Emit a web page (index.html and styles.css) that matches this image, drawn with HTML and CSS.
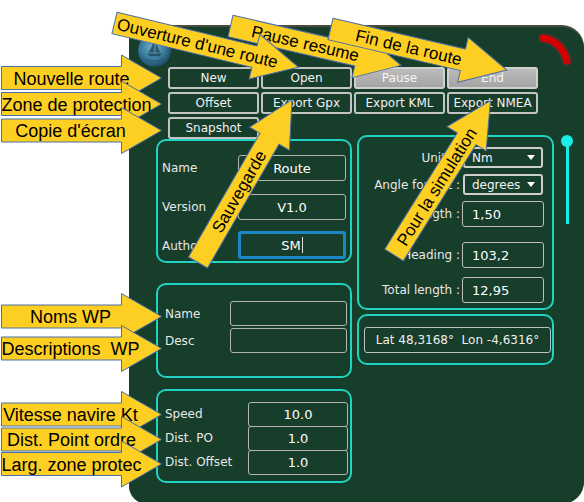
FILE: index.html
```html
<!DOCTYPE html>
<html lang="fr">
<head>
<meta charset="utf-8">
<title>Route editor</title>
<link rel="stylesheet" href="styles.css">
</head>
<body>
<div class="stage">
  <div class="panel">
    <div class="panel-head">
      <svg class="logo" width="35" height="35" viewBox="0 0 36 36">
        <defs>
          <radialGradient id="globe" cx="45%" cy="40%" r="60%">
            <stop offset="0" stop-color="#74b2cf"/>
            <stop offset="0.6" stop-color="#3b7c9e"/>
            <stop offset="1" stop-color="#1c4d66"/>
          </radialGradient>
        </defs>
        <circle cx="18" cy="18" r="17" fill="url(#globe)"/>
        <path d="M18 8 L18 20 L12 20 Z M19 10 L19 20 L24 20 Z" fill="#1f4558" opacity="0.8"/>
        <path d="M10 21 L26 21 L23 24 L13 24 Z" fill="#1f4558" opacity="0.8"/>
        <path d="M8 27 Q18 31 28 27" stroke="#2a5c74" stroke-width="1.5" fill="none"/>
      </svg>
      <svg class="led" width="34" height="34" viewBox="0 0 34 34">
        <path d="M4 5 Q22 7.5 28 28" fill="none" stroke="#3a3a34" stroke-width="10" stroke-linecap="round"/>
        <path d="M4 5 Q22 7.5 28 28" fill="none" stroke="#d20000" stroke-width="7" stroke-linecap="round"/>
      </svg>
    </div>

    <div class="toolbar">
      <div class="btn">New</div>
      <div class="btn">Open</div>
      <div class="btn off">Pause</div>
      <div class="btn off">End</div>
      <div class="btn">Offset</div>
      <div class="btn">Export Gpx</div>
      <div class="btn">Export KML</div>
      <div class="btn">Export NMEA</div>
    </div>

    <div class="content">
      <div class="col-left">
        <div class="btn snap">Snapshot</div>

        <div class="box box-route">
          <span class="lbl">Name</span><div class="field">Route</div>
          <span class="lbl">Version</span><div class="field">V1.0</div>
          <span class="lbl">Author</span><div class="field focus">SM<span class="caret"></span></div>
        </div>

        <div class="box box-wp">
          <span class="lbl">Name</span><div class="field"></div>
          <span class="lbl">Desc</span><div class="field"></div>
        </div>

        <div class="box box-ship">
          <span class="lbl">Speed</span><div class="field">10.0</div>
          <span class="lbl">Dist. PO</span><div class="field">1.0</div>
          <span class="lbl">Dist. Offset</span><div class="field">1.0</div>
        </div>
      </div>

      <div class="col-right">
        <div class="box box-sim">
          <div class="sim-row"><span class="sim-lbl">Units :</span><div class="select"><span>Nm</span><span class="tri"></span></div></div>
          <div class="sim-row r2"><span class="sim-lbl">Angle format :</span><div class="select"><span>degrees</span><span class="tri"></span></div></div>
          <div class="sim-row r3"><span class="sim-lbl">Length :</span><div class="num">1,50</div></div>
          <div class="sim-row r4"><span class="sim-lbl">Heading :</span><div class="num">103,2</div></div>
          <div class="sim-row r5"><span class="sim-lbl">Total length :</span><div class="num">12,95</div></div>
        </div>
        <div class="box box-pos">
          <div class="pos">Lat 48,3168°&nbsp; Lon -4,6316°</div>
        </div>
      </div>

      <div class="slider"><span class="knob"></span><span class="track"></span></div>
    </div>
  </div>

  <svg class="callouts" width="584" height="502" viewBox="0 0 584 502">
    <g class="arrow" transform="translate(230.5 26) rotate(13)">
      <polygon points="0,-11 130,-11 130,-23 175,0 130,23 130,11 0,11"/>
      <text x="22" y="6">Pause resume</text>
    </g>
    <g class="arrow" transform="translate(330.5 29) rotate(13.1)">
      <polygon points="0,-11 136,-11 136,-23 181,0 136,23 136,11 0,11"/>
      <text x="26" y="6">Fin de la route</text>
    </g>
    <g class="arrow" transform="translate(114.5 23) rotate(13.5)">
      <polygon points="0,-11 144,-11 144,-23 189,0 144,23 144,11 0,11"/>
      <text x="3" y="6">Ouverture d'une route</text>
    </g>
    <g class="arrow" transform="translate(198 262.5) rotate(-60)">
      <polygon points="0,-11 143,-11 143,-23 188,0 143,23 143,11 0,11"/>
      <text x="36" y="6">Sauvegarde</text>
    </g>
    <g class="arrow" transform="translate(394 255) rotate(-58)">
      <polygon points="0,-11 137,-11 137,-23 182,0 137,23 137,11 0,11"/>
      <text x="13" y="6">Pour la simulation</text>
    </g>

    <g class="arrow big" transform="translate(1.5 78)">
      <polygon points="0,-11.5 120,-11.5 120,-23 160,0 120,23 120,11.5 0,11.5"/>
      <text x="70" y="6.5" text-anchor="middle">Nouvelle route</text>
    </g>
    <g class="arrow big" transform="translate(1.5 104)">
      <polygon points="0,-11.5 120,-11.5 120,-23 160,0 120,23 120,11.5 0,11.5"/>
      <text x="75" y="6.5" text-anchor="middle">Zone de protection</text>
    </g>
    <g class="arrow big" transform="translate(1.5 130.5)">
      <polygon points="0,-11.5 120,-11.5 120,-23 160,0 120,23 120,11.5 0,11.5"/>
      <text x="69" y="6.5" text-anchor="middle">Copie d'écran</text>
    </g>
    <g class="arrow big" transform="translate(1.5 316.5)">
      <polygon points="0,-11.5 120,-11.5 120,-23 160,0 120,23 120,11.5 0,11.5"/>
      <text x="69" y="6.5" text-anchor="middle">Noms WP</text>
    </g>
    <g class="arrow big" transform="translate(1.5 348.5)">
      <polygon points="0,-11.5 120,-11.5 120,-23 160,0 120,23 120,11.5 0,11.5"/>
      <text x="69" y="6.5" text-anchor="middle" xml:space="preserve">Descriptions  WP</text>
    </g>
    <g class="arrow big" transform="translate(1.5 414.5)">
      <polygon points="0,-11.5 120,-11.5 120,-23 160,0 120,23 120,11.5 0,11.5"/>
      <text x="69" y="6.5" text-anchor="middle">Vitesse navire Kt</text>
    </g>
    <g class="arrow big" transform="translate(1.5 439.5)">
      <polygon points="0,-11.5 120,-11.5 120,-23 160,0 120,23 120,11.5 0,11.5"/>
      <text x="70" y="6.5" text-anchor="middle">Dist. Point ordre</text>
    </g>
    <g class="arrow big" transform="translate(1.5 464)">
      <polygon points="0,-11.5 120,-11.5 120,-23 160,0 120,23 120,11.5 0,11.5"/>
      <text x="70" y="6.5" text-anchor="middle">Larg. zone protec</text>
    </g>
  </svg>
</div>
</body>
</html>
```

FILE: styles.css
```css
* { box-sizing: border-box; }

body {
  margin: 0;
  background: #ffffff;
  font-family: "DejaVu Sans", "Noto Sans", sans-serif;
}

.stage {
  position: relative;
  width: 584px;
  height: 502px;
  overflow: hidden;
  padding: 27px 0 0 129px;
}

.panel {
  width: 455px;
  height: 477px;
  background: #173d2b;
  border-radius: 2px 22px 22px 18px;
  color: #ececec;
  font-size: 12px;
  box-shadow: 0 -2px 0 #4b4c3e;
}

.panel-head {
  height: 40px;
  display: flex;
  justify-content: space-between;
  align-items: flex-start;
}

.logo { margin: 6px 0 0 8px; }
.led { margin: 6px 11px 0 0; }

.toolbar {
  display: grid;
  grid-template-columns: repeat(4, 91px);
  grid-auto-rows: 22px;
  column-gap: 2px;
  row-gap: 3px;
  margin-left: 39px;
}

.btn {
  border: 2px solid #c4c4c4;
  border-radius: 3px;
  display: flex;
  align-items: center;
  justify-content: center;
  font-size: 12px;
  color: #f2f2f2;
  white-space: nowrap;
}

.btn.off {
  background: linear-gradient(#bcbcbc, #a4a4a4);
  border-color: #d0d0d0;
  color: #f6f6f6;
}

.content {
  display: flex;
  align-items: flex-start;
  margin-top: 3px;
}

.col-left {
  margin-left: 27px;
  width: 196px;
  display: flex;
  flex-direction: column;
}

.snap {
  width: 91px;
  height: 22px;
  margin-left: 12px;
}

.box {
  border: 2px solid #22d2c2;
  border-radius: 10px;
}

.lbl { color: #e8e8e8; white-space: nowrap; }

.field {
  height: 26px;
  border: 1px solid #b4b4b4;
  border-radius: 3px;
  display: flex;
  align-items: center;
  justify-content: center;
  font-size: 13px;
  color: #ffffff;
}

.field.focus {
  height: 28px;
  margin-top: -2px;
  border: 3px solid #1a88c4;
  border-radius: 3px;
}

.caret {
  display: inline-block;
  width: 1px;
  height: 16px;
  margin-left: 1px;
  background: #e0e0e0;
}

.box-route {
  height: 124px;
  padding: 14px 0 0 4px;
  display: grid;
  grid-template-columns: 76px 108px;
  grid-auto-rows: 26px;
  row-gap: 13px;
  align-items: center;
}

.box-wp {
  margin-top: 20px;
  height: 95px;
  padding: 16px 0 0 7px;
  display: grid;
  grid-template-columns: 65px 117px;
  grid-auto-rows: 25px;
  row-gap: 2px;
  align-items: center;
}

.box-wp .field { height: 25px; }

.box-ship {
  margin-top: 11px;
  height: 94px;
  padding: 11px 0 0 7px;
  display: grid;
  grid-template-columns: 83px 100px;
  grid-auto-rows: 24px;
  row-gap: 0;
  align-items: center;
}

.box-ship .field { height: 25px; }

.col-right {
  margin-left: 5px;
  margin-top: 18px;
  width: 197px;
}

.box-sim {
  height: 175px;
  padding-top: 10px;
}

.sim-row {
  display: flex;
  align-items: center;
}

.sim-row.r2 { margin-top: 6px; }
.sim-row.r3 { margin-top: 6px; }
.sim-row.r4 { margin-top: 15px; }
.sim-row.r5 { margin-top: 9px; }

.sim-lbl {
  width: 101px;
  margin-right: 2px;
  text-align: right;
  color: #e8e8e8;
  white-space: nowrap;
}

.select {
  width: 80px;
  height: 21px;
  margin-left: 1px;
  border: 2px solid #cdcdcd;
  border-radius: 3px;
  display: flex;
  align-items: center;
  justify-content: space-between;
  padding: 0 6px 0 7px;
  font-size: 12px;
  color: #f4f4f4;
}

.tri {
  width: 0;
  height: 0;
  border-left: 4.5px solid transparent;
  border-right: 4.5px solid transparent;
  border-top: 5px solid #ffffff;
}

.num {
  width: 82px;
  height: 26px;
  border: 1px solid #bcbcbc;
  border-radius: 3px;
  display: flex;
  align-items: center;
  padding-left: 9px;
  font-size: 13px;
  color: #ffffff;
}

.box-pos {
  margin-top: 4px;
  height: 51px;
  padding: 11px 0 0 5px;
}

.pos {
  width: 187px;
  height: 26px;
  border: 1px solid #c0c0c0;
  border-radius: 3px;
  display: flex;
  align-items: center;
  justify-content: center;
  font-size: 12px;
  color: #f0f0f0;
  white-space: nowrap;
}

.slider {
  margin-left: 7px;
  margin-top: 18px;
  width: 12px;
  display: flex;
  flex-direction: column;
  align-items: center;
}

.knob {
  width: 12px;
  height: 12px;
  border-radius: 50%;
  background: #19efe6;
}

.track {
  width: 3px;
  height: 83px;
  margin-top: -6px;
  background: #19efe6;
}

.callouts {
  position: absolute;
  top: 0;
  left: 0;
  pointer-events: none;
}

.arrow polygon {
  fill: #fdcf22;
  stroke: #4a6ea8;
  stroke-width: 1;
  stroke-linejoin: miter;
}

.arrow text {
  font-family: "Liberation Sans", Arial, sans-serif;
  font-size: 17px;
  fill: #000000;
}

.arrow.big text { font-size: 18px; }
```
